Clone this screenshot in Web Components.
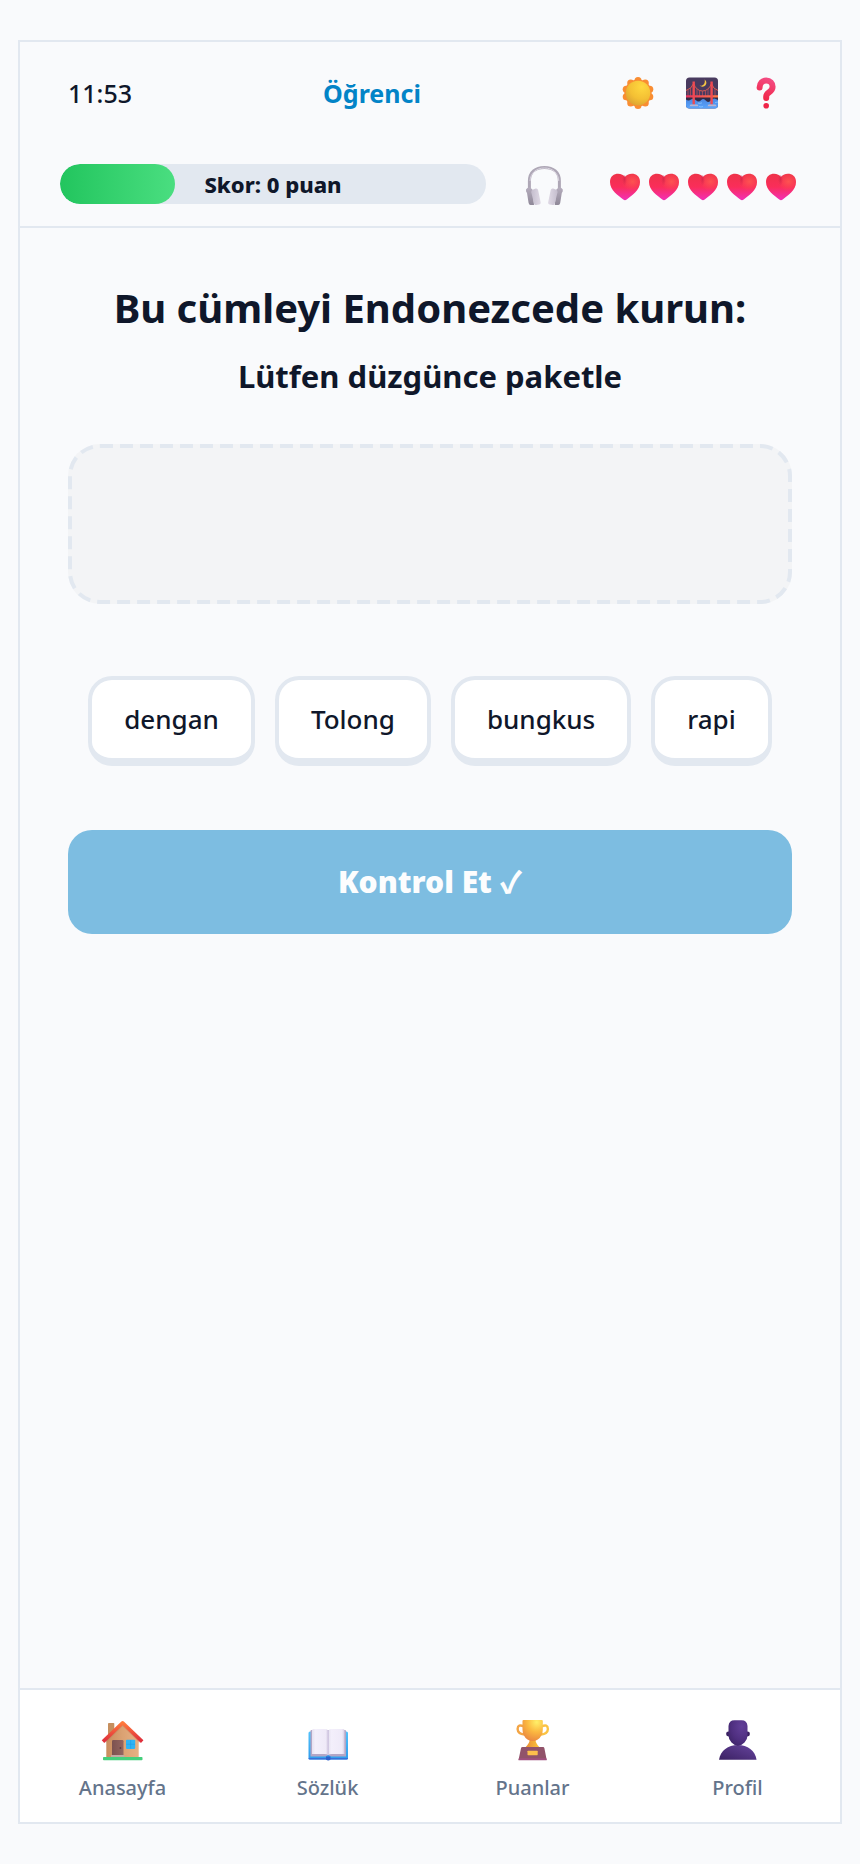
<!DOCTYPE html>
<html lang="tr">
<head>
  <meta charset="UTF-8">
  <meta name="viewport" content="width=device-width, initial-scale=1">
  <title>Endonezce</title>
  <style>
    :root {
      --bg: #f9fafc;
      --card: #ffffff;
      --line: #e2e8f0;
      --ink: #0f172a;
      --muted: #64748b;
      --brand: #0284c7;
      --edge: 40px;
    }

    body {
      margin: 0;
      padding: var(--edge) 0;
      background: var(--bg);
      color: var(--ink);
      font-family: "Segoe UI", "Noto Sans", "Noto Sans CJK SC", sans-serif;
    }
  </style>
</head>
<body>
  <app-shell>
    <status-header slot="header" time="11:53" user="Öğrenci" score="0" lives="5"></status-header>
    <sentence-task heading="Bu cümleyi Endonezcede kurun:" sentence="Lütfen düzgünce paketle">
      <word-chip>dengan</word-chip>
      <word-chip>Tolong</word-chip>
      <word-chip>bungkus</word-chip>
      <word-chip>rapi</word-chip>
    </sentence-task>
    <tab-bar slot="footer">
      <tab-item icon="house">Anasayfa</tab-item>
      <tab-item icon="book">Sözlük</tab-item>
      <tab-item icon="trophy">Puanlar</tab-item>
      <tab-item icon="person">Profil</tab-item>
    </tab-bar>
  </app-shell>

  <script>
    // Ten bumps around the sun disc
    const sunBumps = Array.from({ length: 10 }, (_, i) => {
      const a = (i * 36 - 90) * Math.PI / 180;
      return `<circle cx="${(16 + 12.4 * Math.cos(a)).toFixed(1)}" cy="${(16 + 12.4 * Math.sin(a)).toFixed(1)}" r="3.5"/>`;
    }).join("");

    // Suspenders of the bridge: [x, y where the cable is]
    const hangers = [[2, 13], [4.5, 11], [11, 12], [13.5, 13.5], [16.5, 14], [19.5, 13.5], [22, 12], [29, 12]]
      .map(([x, y]) => `M${x} ${y}V19`).join("");

    const heartPath = "M17 11C14.5 6.2 2 5.5 2 16c0 8.5 8.5 13.5 13.3 17.6q1.7 1.4 3.4 0C23.5 29.5 32 24.5 32 16 32 5.5 19.5 6.2 17 11z";

    const icons = {
      sun: {
        size: 32,
        art: `
          <defs>
            <radialGradient id="disc" cx=".65" cy=".25" r=".9"><stop offset="0" stop-color="#ffd83f"/><stop offset=".55" stop-color="#f4c034"/><stop offset="1" stop-color="#d59a33"/></radialGradient>
          </defs>
          <g fill="#f98d33">${sunBumps}<circle cx="16" cy="16" r="13.6"/></g>
          <circle cx="16" cy="16" r="12.3" fill="url(#disc)"/>`
      },
      bridge: {
        size: 32,
        art: `
          <defs>
            <clipPath id="frame"><rect y=".5" width="32" height="31" rx="3.5"/></clipPath>
            <linearGradient id="steel" gradientUnits="userSpaceOnUse" x1="0" y1="0" x2="32" y2="0"><stop offset="0" stop-color="#e8305f"/><stop offset="1" stop-color="#ff7a45"/></linearGradient>
            <linearGradient id="sea" x1="0" y1="0" x2="0" y2="1"><stop offset="0" stop-color="#4a86e0"/><stop offset="1" stop-color="#5aa6ff"/></linearGradient>
          </defs>
          <g clip-path="url(#frame)">
            <rect width="32" height="32" fill="#493a5f"/>
            <rect y="19" width="32" height="6" fill="#322a45"/>
            <path d="M0 22.5q2.5 1.8 5 0t5 .8 5 0 5 .4 5-.4 7-.2V32H0z" fill="url(#sea)"/>
            <path d="M18.6 2.4a4 4 0 1 1-5 6.2c3.5.6 6-2.1 5-6.2z" fill="#f6c544"/>
            <path d="M0 13.5Q5.5 12 7.6 6.5Q10.5 14 16.5 14T25.5 6.5Q27 12 32 13.5" fill="none" stroke="#e8604f" stroke-width=".9"/>
            <path d="${hangers}" stroke="#c9525c" stroke-width=".7"/>
            <path d="M0 18.3h32v2.2H0z" fill="url(#steel)"/>
            <path d="M6.5 4.5h2.4v23H6.5zM24.4 4.5h2.4v23h-2.4z" fill="#ee4a52"/>
            <path d="M4.5 27.5h7l1 1.8h-9zM22.5 27.5h7l1 1.8h-9z" fill="#b9b4cf"/>
            <path d="M13 29.5q2 1 4 0M12 26q2 .8 4-.2M29 25.5l3-.5" fill="none" stroke="#8dc6ff" stroke-width=".8"/>
          </g>`
      },
      question: {
        size: 32,
        art: `
          <defs><linearGradient id="red" gradientUnits="userSpaceOnUse" x1="22" y1="0" x2="12" y2="26"><stop offset="0" stop-color="#f4508a"/><stop offset="1" stop-color="#f01f3c"/></linearGradient></defs>
          <path d="M9.6 10.6C9.6 6 12.5 3.6 16.2 3.6c4 0 6.4 2.7 6.4 6.1 0 5.9-6.400 5.200-6.400 9.900v1.400" fill="none" stroke="url(#red)" stroke-width="6" stroke-linecap="round"/>
          <circle cx="16.2" cy="28.7" r="2.8" fill="#ef2548"/>`
      },
      headphones: {
        size: 42,
        art: `
          <defs>
            <linearGradient id="shell" x1="0" y1="0" x2="0" y2="1"><stop offset="0" stop-color="#b5adbd"/><stop offset="1" stop-color="#8f8898"/></linearGradient>
            <linearGradient id="pad" x1="0" y1="0" x2="1" y2="0"><stop offset="0" stop-color="#c4bdcd"/><stop offset="1" stop-color="#e0dae6"/></linearGradient>
          </defs>
          <path d="M3.4 26V18C3.4 9 9.5 4.4 18.4 4.4S33.400 9 33.400 18v8" fill="none" stroke="#aea7b6" stroke-width="3"/>
          <path d="M4 18C4.500 10 10 5 18.4 5s13.9 5 14.4 13" fill="none" stroke="#d9d3df"/>
          <g id="cup">
            <path d="M0 26.5q1.5-2.500 4-2l2.5 2L8 42H4.500Q3 42 2.6 40L1 30Q-.3 28.500 0 26.5z" fill="url(#shell)"/>
            <path d="M5.2 29q0-2 2-2.6l2.400-.8q2-.5 2.500 1.5l2.6 12.500q.3 1.6-1.4 1.9l-3.300.5q-1.700.2-2-1.500z" fill="url(#pad)"/>
          </g>
          <use href="#cup" transform="matrix(-1 0 0 1 36.800 0)"/>`
      },
      heart: {
        size: 36,
        art: `
          <defs>
            <linearGradient id="base" x1="0" y1="0" x2="0" y2="1"><stop offset="0" stop-color="#ee3349"/><stop offset=".5" stop-color="#fa2d5a"/><stop offset="1" stop-color="#f22fb8"/></linearGradient>
            <radialGradient id="shine" cx=".75" cy=".3" r=".36"><stop offset="0" stop-color="#ff5c50" stop-opacity=".8"/><stop offset="1" stop-color="#ff5050" stop-opacity="0"/></radialGradient>
            <radialGradient id="crease" cx=".5" cy=".3" r=".5"><stop offset="0" stop-color="#c81f48" stop-opacity=".6"/><stop offset="1" stop-color="#d01f4c" stop-opacity="0"/></radialGradient>
          </defs>
          <path fill="url(#base)" d="${heartPath}"/>
          <path fill="url(#shine)" d="${heartPath}"/>
          <ellipse cx="16.500" cy="16" rx="2.500" ry="7" fill="url(#crease)"/>`
      },
      house: {
        size: 42,
        art: `
          <defs>
            <linearGradient id="wall" x1="0" x2="1"><stop offset="0" stop-color="#c98d5e"/><stop offset=".5" stop-color="#dba273"/><stop offset="1" stop-color="#e8b183"/></linearGradient>
            <linearGradient id="roof" x1="0" y1="0" x2="0" y2="1"><stop offset="0" stop-color="#ff7a3c"/><stop offset="1" stop-color="#e0303c"/></linearGradient>
            <linearGradient id="door" x1="0" x2="1"><stop offset="0" stop-color="#7c5250"/><stop offset="1" stop-color="#946560"/></linearGradient>
          </defs>
          <rect x="6" y="4" width="6.3" height="16" rx=".8" fill="#c68f5e"/>
          <path d="M20.5 5.5L36.7 20v18H4.3V20z" fill="url(#wall)"/>
          <path d="M3 22.7L20.6 5l17.6 17.7" fill="none" stroke="#b8734f" stroke-opacity=".35" stroke-width="3"/>
          <path d="M2.3 21.4L20.6 3.8l18.3 17.6" fill="none" stroke="url(#roof)" stroke-width="3.6" stroke-linejoin="round" stroke-linecap="square"/>
          <rect x="10" y="21" width="11.5" height="16" rx="1.2" fill="url(#door)"/>
          <circle cx="18.4" cy="29" r=".9" fill="#5f3d3f"/>
          <rect x="24" y="20.7" width="9.2" height="9.2" rx=".8" fill="#2fb4f5"/>
          <path d="M28.6 21v8.6M24.3 25.3h8.6" stroke="#1c9be6" stroke-width=".5"/>
          <rect x="9" y="36" width="13.5" height="2.5" fill="#c2aaa3"/>
          <rect x="1" y="38" width="39.5" height="3.2" rx=".8" fill="#46cf7c"/>`
      },
      book: {
        size: 42,
        art: `
          <defs>
            <linearGradient id="cover" x1="0" y1="0" x2="0" y2="1"><stop offset="0" stop-color="#52c2fb"/><stop offset="1" stop-color="#2f9cec"/></linearGradient>
            <linearGradient id="page" x1="0" x2="1"><stop offset="0" stop-color="#e6e1f0"/><stop offset=".2" stop-color="#f3effb"/><stop offset=".85" stop-color="#efeaf8"/><stop offset="1" stop-color="#d5cce3"/></linearGradient>
          </defs>
          <rect x="1.5" y="12.5" width="39.5" height="28" rx="1.5" fill="url(#cover)"/>
          <path d="M1.5 39H41v.5q0 1-1.200 1H2.700q-1.200 0-1.200-1z" fill="#3a6fd8"/>
          <path d="M19 37.500h4.500v3q-2.200 2-4.500 0z" fill="#2e60cc"/>
          <path d="M3.500 12q0-1 1-1h33.500q1 0 1 1v25.500H24l-2.800-1.500L18.500 37.500h-15z" fill="#b3a6c6"/>
          <path d="M5 11.500q0-1.500 1.500-1.500H18q3.200 0 3.200 2.500V36Q20 35 17.500 35H5z" fill="url(#page)"/>
          <path d="M37.500 11.500q0-1.500-1.500-1.500H24.500q-3.300 0-3.300 2.500V36q1.200-1 3.800-1h12.500z" fill="url(#page)"/>
          <path d="M21.200 11.500V36" stroke="#cfc5e0" stroke-width="1.200"/>`
      },
      trophy: {
        size: 42,
        art: `
          <defs>
            <radialGradient id="gold" cx=".7" cy=".1" r=".95"><stop offset="0" stop-color="#fff069"/><stop offset=".5" stop-color="#fbb840"/><stop offset="1" stop-color="#ea8740"/></radialGradient>
            <linearGradient id="foot" x1="0" x2="1"><stop offset="0" stop-color="#e98c33"/><stop offset="1" stop-color="#fbc63c"/></linearGradient>
          </defs>
          <path d="M12 7.500Q5.800 4.500 5.600 10q.2 5 7 5.500" fill="none" stroke="#f3a545" stroke-width="2.400"/>
          <path d="M29.500 7.500q6.200-3 6.400 2.500-.2 5-7 5.500" fill="none" stroke="#fbc344" stroke-width="2.400"/>
          <path d="M18 20h5.300q.2 4.500 4.200 8.200h-14Q17.500 24.500 18 20z" fill="url(#foot)"/>
          <path d="M10.500 2q0-1 1-1h18.300q1 0 1 1v8.500q0 6.500-5 10-2.200 1.500-5.100 1.500t-5.200-1.500q-5-3.500-5-10z" fill="url(#gold)"/>
          <path d="M10.500 28h20.500q1.200 0 1.400 1.200L34.700 41H6.500L9 29.200q.2-1.200 1.500-1.200z" fill="#91536a"/>
          <path d="M6.900 39.200h27.400l.4 2H6.500z" fill="#a0507f"/>
          <rect x="15.500" y="31.700" width="10.200" height="4.500" rx=".6" fill="#fcc04c"/>`
      },
      person: {
        size: 42,
        art: `
          <defs>
            <radialGradient id="face" cx=".7" cy=".25" r=".9"><stop offset="0" stop-color="#623f98"/><stop offset=".6" stop-color="#4f2f80"/><stop offset="1" stop-color="#3c2266"/></radialGradient>
            <linearGradient id="torso" x1="0" y1="1" x2="1" y2="0"><stop offset="0" stop-color="#3b2163"/><stop offset="1" stop-color="#66449d"/></linearGradient>
          </defs>
          <circle cx="11.500" cy="15" r="2.400" fill="#3a2160"/>
          <circle cx="30.500" cy="15" r="2.400" fill="#3a2160"/>
          <path d="M2 40.800C3.500 31.500 11 26 20.800 26s17.300 5.500 18.800 14.800z" fill="url(#torso)"/>
          <path d="M11.500 7q.4-5.800 6-5.800h7q5.600 0 6 5.800v9.500q0 4-3 7-3 3.200-6.500 3.200t-6.500-3.200q-3-3-3-7z" fill="url(#face)"/>`
      }
    };

    class EmojiIcon extends HTMLElement {
      constructor() {
        super();
        this.attachShadow({ mode: "open" });
      }

      connectedCallback() {
        const { size, art } = icons[this.getAttribute("name")];
        this.shadowRoot.innerHTML = `
          <style>
            :host { display: block; width: ${size}px; height: ${size}px; }
            svg { display: block; width: 100%; height: 100%; overflow: visible; }
          </style>
          <svg viewBox="0 0 ${size} ${size}" aria-hidden="true">${art}</svg>
        `;
      }
    }

    class AppShell extends HTMLElement {
      constructor() {
        super();
        this.attachShadow({ mode: "open" }).innerHTML = `
          <style>
            :host {
              display: flex;
              flex-direction: column;
              box-sizing: border-box;
              min-height: calc(100vh - 2 * var(--edge));
              margin: 0 18px;
              border: 2px solid var(--line);
            }
            main { flex: 1; }
          </style>
          <slot name="header"></slot>
          <main><slot></slot></main>
          <slot name="footer"></slot>
        `;
      }
    }

    class StatusHeader extends HTMLElement {
      constructor() {
        super();
        this.attachShadow({ mode: "open" });
      }

      connectedCallback() {
        const lives = Number(this.getAttribute("lives"));
        this.shadowRoot.innerHTML = `
          <style>
            :host {
              display: flex;
              flex-direction: column;
              gap: 40px;
              padding: 24px 40px 18px;
              border-bottom: 2px solid var(--line);
            }
            .top {
              display: flex;
              align-items: center;
              justify-content: space-between;
              padding: 0 8px;
            }
            time { font-size: 25px; line-height: 32px; font-weight: 500; }
            .user { color: var(--brand); font-size: 25px; line-height: 32px; font-weight: 700; }
            .tools { display: flex; gap: 12px; }
            button {
              display: grid;
              place-items: center;
              padding: 0;
              border: 0;
              background: none;
              cursor: pointer;
            }
            .tools button { width: 52px; height: 54px; }
            .stats { display: flex; align-items: center; gap: 40px; min-height: 48px; }
            .score {
              flex: 1;
              display: grid;
              height: 40px;
              border-radius: 20px;
              background: var(--line);
              overflow: hidden;
            }
            .score > * { grid-area: 1 / 1; }
            .fill {
              width: 27%;
              border-radius: 20px;
              background: linear-gradient(90deg, #22c55e, #4ade80);
            }
            .score span {
              place-self: center;
              font-size: 22px;
              line-height: 28px;
              font-weight: 800;
            }
            .lives { display: flex; gap: 3px; }
          </style>
          <div class="top">
            <time>${this.getAttribute("time")}</time>
            <span class="user">${this.getAttribute("user")}</span>
            <div class="tools">
              <button type="button" aria-label="Açık tema"><emoji-icon name="sun"></emoji-icon></button>
              <button type="button" aria-label="Koyu tema"><emoji-icon name="bridge"></emoji-icon></button>
              <button type="button" aria-label="Yardım"><emoji-icon name="question"></emoji-icon></button>
            </div>
          </div>
          <div class="stats">
            <div class="score">
              <div class="fill"></div>
              <span>Skor: ${this.getAttribute("score")} puan</span>
            </div>
            <button type="button" aria-label="Dinle"><emoji-icon name="headphones"></emoji-icon></button>
            <div class="lives">${'<emoji-icon name="heart"></emoji-icon>'.repeat(lives)}</div>
          </div>
        `;
      }
    }

    class WordChip extends HTMLElement {
      constructor() {
        super();
        this.attachShadow({ mode: "open" }).innerHTML = `
          <style>
            :host { display: block; }
            button {
              display: block;
              padding: 20px 32px;
              border: 4px solid var(--line);
              border-bottom-width: 8px;
              border-radius: 24px;
              background: var(--card);
              color: var(--ink);
              font-family: inherit;
              font-size: 26px;
              line-height: 38px;
              font-weight: 500;
              cursor: pointer;
            }
          </style>
          <button type="button"><slot></slot></button>
        `;
      }

      connectedCallback() {
        this.addEventListener("click", () => {
          this.dispatchEvent(new CustomEvent("chip-picked", { bubbles: true, composed: true }));
        });
      }
    }

    class SentenceTask extends HTMLElement {
      constructor() {
        super();
        this.attachShadow({ mode: "open" });
      }

      connectedCallback() {
        this.shadowRoot.innerHTML = `
          <style>
            :host { display: block; padding: 52px 48px 48px; text-align: center; }
            h1 { margin: 0 0 18px; font-size: 40px; line-height: 56px; font-weight: 700; }
            h2 { margin: 0 0 46px; font-size: 31px; line-height: 44px; font-weight: 700; }
            .answer, .bank {
              display: flex;
              flex-wrap: wrap;
              justify-content: center;
              gap: 20px;
            }
            .answer {
              position: relative;
              box-sizing: border-box;
              align-content: center;
              min-height: 160px;
              padding: 28px;
              border-radius: 32px;
              background: #f3f4f6;
            }
            /* Outline with longer dashes than a dashed border has */
            .outline {
              position: absolute;
              inset: 0;
              width: 100%;
              height: 100%;
              pointer-events: none;
            }
            .outline rect {
              x: 2px;
              y: 2px;
              width: calc(100% - 4px);
              height: calc(100% - 4px);
              rx: 30px;
              fill: none;
              stroke: var(--line);
              stroke-width: 4px;
              stroke-dasharray: 13 7;
            }
            .bank { margin: 72px 0 64px; }
            .check {
              width: 100%;
              padding: 32px;
              border: 0;
              border-radius: 24px;
              background: #7dbde1;
              color: #fcfdfe;
              font-family: inherit;
              font-size: 30px;
              line-height: 40px;
              font-weight: 900;
            }
          </style>
          <h1>${this.getAttribute("heading")}</h1>
          <h2>${this.getAttribute("sentence")}</h2>
          <div class="answer">
            <svg class="outline" aria-hidden="true"><rect/></svg>
            <slot name="answer"></slot>
          </div>
          <div class="bank"><slot></slot></div>
          <button class="check" type="button" disabled>Kontrol Et ✓</button>
        `;

        // A picked word moves between the bank and the answer box
        this.addEventListener("chip-picked", (e) => {
          e.target.slot = e.target.slot === "answer" ? "" : "answer";
          this.shadowRoot.querySelector(".check").disabled = !this.querySelector("[slot=answer]");
        });
      }
    }

    class TabBar extends HTMLElement {
      constructor() {
        super();
        this.attachShadow({ mode: "open" }).innerHTML = `
          <style>
            :host { display: block; border-top: 2px solid var(--line); background: var(--card); }
            nav { display: grid; grid-template-columns: repeat(4, 1fr); }
          </style>
          <nav><slot></slot></nav>
        `;
      }
    }

    class TabItem extends HTMLElement {
      constructor() {
        super();
        this.attachShadow({ mode: "open" });
      }

      connectedCallback() {
        this.shadowRoot.innerHTML = `
          <style>
            :host { display: block; }
            a {
              display: flex;
              flex-direction: column;
              align-items: center;
              gap: 13px;
              padding: 29px 0 20px;
              color: var(--muted);
              font-size: 20px;
              line-height: 28px;
              font-weight: 500;
              text-decoration: none;
            }
          </style>
          <a href="#${this.getAttribute("icon")}">
            <emoji-icon name="${this.getAttribute("icon")}"></emoji-icon>
            <slot></slot>
          </a>
        `;
      }
    }

    customElements.define("emoji-icon", EmojiIcon);
    customElements.define("app-shell", AppShell);
    customElements.define("status-header", StatusHeader);
    customElements.define("word-chip", WordChip);
    customElements.define("sentence-task", SentenceTask);
    customElements.define("tab-bar", TabBar);
    customElements.define("tab-item", TabItem);
  </script>
</body>
</html>
